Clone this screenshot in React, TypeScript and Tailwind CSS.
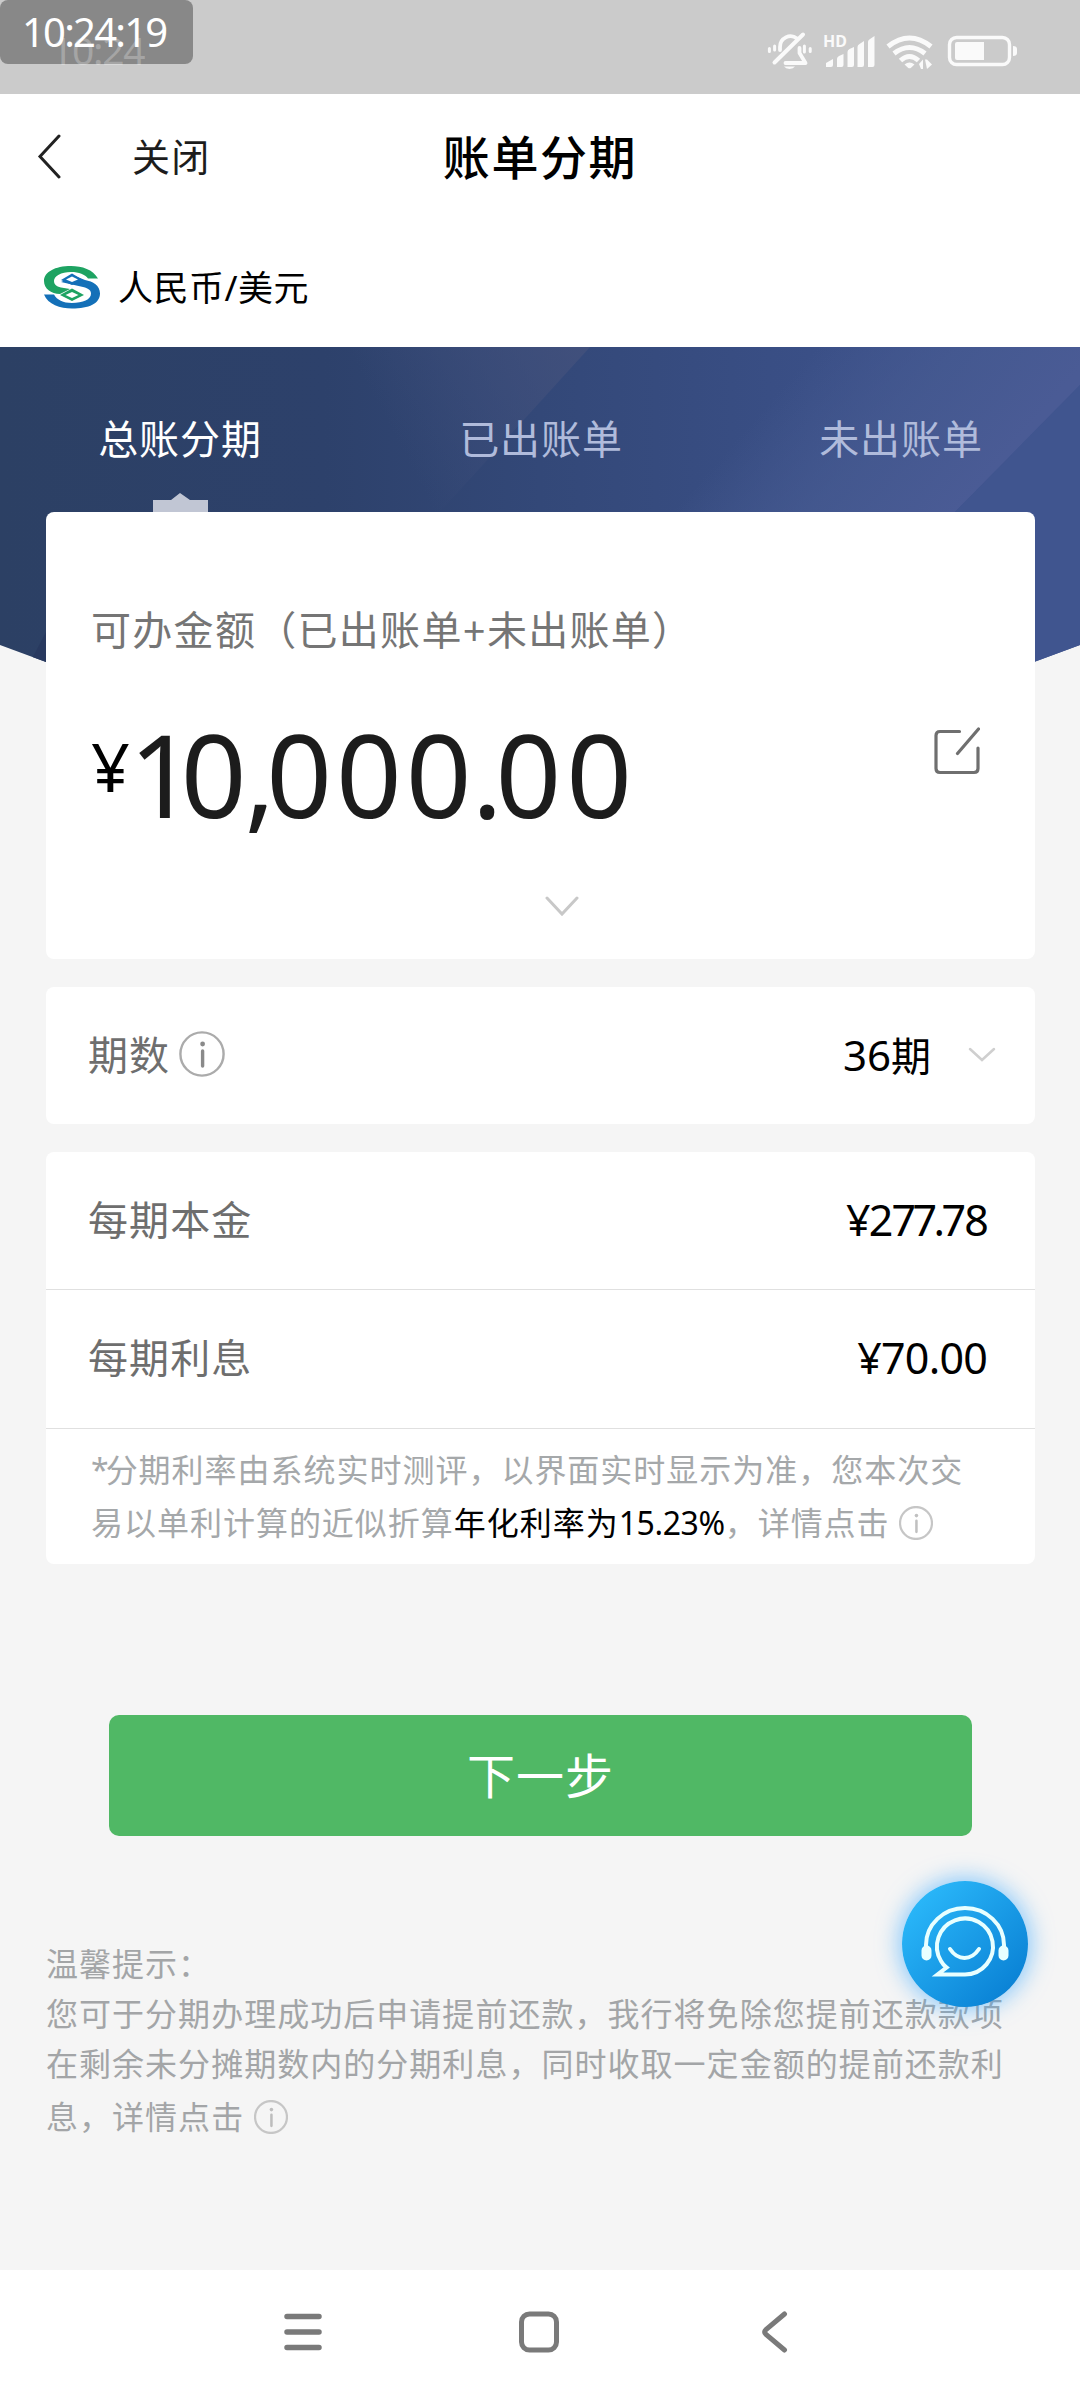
import type { ReactNode } from 'react';

function InfoIcon({ size, ring, mark, width }: { size: number; ring: string; mark: string; width: number }) {
  return (
    <svg width={size} height={size} viewBox="0 0 46 46" fill="none" className="shrink-0">
      <circle cx="23" cy="23" r="21.6" stroke={ring} strokeWidth={width} />
      <circle cx="23.6" cy="13" r="2.4" fill={mark} />
      <path d="M23.6 20v15" stroke={mark} strokeWidth={3.4} strokeLinecap="round" />
    </svg>
  );
}

function StatusIcons() {
  return (
    <svg width="256" height="48" viewBox="764 28 256 48" fill="none" className="absolute left-[764px] top-[28px]">
      <g stroke="#fafafa" strokeWidth="3.8" strokeLinecap="round" strokeLinejoin="round">
        <path d="M780 50v-3a10.500 10.500 0 0 1 17-8.500M799.500 48v5l6 10h-20" />
        <path d="M774.500 62.500L803 34.500" strokeWidth="4" />
        <path d="M774.600 46v4M804.400 46v6" strokeWidth="3" />
        <path d="M769.400 48.500v3M810.200 48.500v3" strokeWidth="3" />
      </g>
      <path d="M784 66.500h11a6 4 0 0 1-11 0z" fill="#fafafa" />
      <path d="M826 67v-4l7-4v6q0 2-2 2zM837 67v-8q0-2 2-3l4.500-2v11q0 2-2 2zM847.500 67V52q0-2 2-3l4.500-2v18q0 2-2 2zM857.500 67V47q0-2 2-3l4.500-3v24q0 2-2 2zM868 67V42q0-2 2-3l4.500-3v29q0 2-2 2z" fill="#fafafa" />
      <g stroke="#fafafa" strokeWidth="5">
        <path d="M888 46.500q21.500-17 43 0" />
        <path d="M894 53.500q15.500-12 31 0" />
        <path d="M900.500 60.500q9-8 18 0" />
      </g>
      <path d="M904.500 64.500q5-4 10 0l-3.500 3.200q-1.500 1-3 0zM919 64l4-4.500v9.500h-2zM925 59.500h2l5 5-5 4.500z" fill="#fafafa" />
      <rect x="949.500" y="37.500" width="60" height="27" rx="7" stroke="#fafafa" strokeWidth="3.400" />
      <path d="M957 42h27v18h-27q-2 0-2-2V44q0-2 2-2zM1013 46q4 0 4 3v4q0 3-4 3z" fill="#fafafa" />
    </svg>
  );
}

function StatusBar() {
  return (
    <header className="relative h-[94px] bg-[#cbcbcb]">
      <div className="absolute left-0 top-0 h-[64px] w-[193px] rounded-[8px] bg-[#888888]" />
      <div className="absolute left-[51px] top-[22px] text-[39px] leading-[56px] tracking-[-1.300px] text-white/25">10:24</div>
      <div className="absolute left-[22px] top-[1px] whitespace-nowrap text-[40px] leading-[62px] tracking-[-1.800px] text-white">
        10:24:19
      </div>
      <span className="absolute left-[823px] top-[33px] text-[16px] font-bold leading-[16px] text-[#fafafa]">HD</span>
      <StatusIcons />
    </header>
  );
}

function BankLogo() {
  return (
    <svg width="58" height="44" viewBox="0 0 58 44" fill="none">
      <path d="M55 13.500C50 4.500 39 1 28 1 12 1 1 7 1 16c0 8 7 12.500 16 13l10-5-9-1.500C13 21.500 11 19 11 16c0-5 7-9 17-9 8 0 14 2.500 17 6.500z" fill="#1ea362" />
      <path d="M1 29.500C5 39.500 17 43.500 29 43.500c17 0 28-5 28-15 0-8-7-12-15-13.500L32 11l-14 6 22 5c6 1.500 8 3.500 8 6.500 0 6-8 9.500-19 9.500-9 0-15-3-18-8.500z" fill="#1470b8" />
      <path d="M29 8.500l11 6.500-11 5-11-5z" fill="#1470b8" />
      <path d="M29 11.500l6 3-6 2.500-6-2.500z" fill="white" />
      <path d="M29 23.500l12 6.500-12 6-12-6z" fill="#1ea362" />
      <path d="M29 27l6.500 3-6.500 3-6.500-3z" fill="white" />
    </svg>
  );
}

function HeroBackground() {
  return (
    <svg width="1080" height="340" viewBox="0 0 1080 340" className="absolute left-0 top-0">
      <defs>
        <linearGradient id="hero" x1="0" y1="0" x2="1" y2="0">
          <stop offset="0" stopColor="#2c4064" />
          <stop offset="0.3" stopColor="#2d416b" />
          <stop offset="0.5" stopColor="#334878" />
          <stop offset="0.75" stopColor="#3a4f86" />
          <stop offset="1" stopColor="#405490" />
        </linearGradient>
        <linearGradient id="bandA" gradientUnits="userSpaceOnUse" x1="400" y1="100" x2="590" y2="0">
          <stop offset="0" stopColor="#43517c" stopOpacity="0" />
          <stop offset="1" stopColor="#43517c" stopOpacity="0.85" />
        </linearGradient>
        <linearGradient id="bandB" gradientUnits="userSpaceOnUse" x1="800" y1="20" x2="960" y2="160">
          <stop offset="0" stopColor="#495d94" stopOpacity="0" />
          <stop offset="0.5" stopColor="#475b92" stopOpacity="0.7" />
          <stop offset="1" stopColor="#4a5b95" />
        </linearGradient>
        <clipPath id="heroShape">
          <path d="M0 0h1080v298L1034 315H46L0 298z" />
        </clipPath>
      </defs>
      <g clipPath="url(#heroShape)">
        <path d="M0 0h1080v340H0z" fill="url(#hero)" />
        <path d="M200 0h390L440 165H200z" fill="url(#bandA)" />
        <path d="M700 0h380v38L955 165H600z" fill="url(#bandB)" />
        <path d="M1080 38v302H800L955 165z" fill="#40558f" />
        <path d="M46 285v40H25z" fill="#28395f" />
      </g>
    </svg>
  );
}

function Tabs() {
  const tabs = ['总账分期', '已出账单', '未出账单'];
  return (
    <div className="relative grid h-[165px] grid-cols-3">
      {tabs.map((tab, i) => (
        <div key={tab} className={i === 0 ? 'relative pt-[62px] text-center text-white' : 'relative pl-[2px] pt-[62px] text-center text-[#b0bbdb]'}>
          <span className="text-[40px] leading-[60px] tracking-[0.9px]">{tab}</span>
          {i === 0 && (
            <svg width="56" height="20" viewBox="0 0 56 20" className="absolute bottom-0 left-[153px]">
              <path d="M0 8h18l9-7 10 7h18v12H0z" fill="#c1c6d4" />
            </svg>
          )}
        </div>
      ))}
    </div>
  );
}

function AmountCard() {
  return (
    <section className="relative mx-[46px] h-[447px] w-[989px] rounded-[8px] bg-white pl-[45px] pr-[55px]">
      <p className="pt-[88px] text-[40px] leading-[60px] tracking-[1.300px] text-[#757575]">可办金额（已出账单+未出账单）</p>
      <div className="flex h-[150px] items-start justify-between pt-[41px]">
        <div className="flex items-start">
          <span className="pt-[32px] text-[68px] leading-[66px] tracking-[-1px] text-black">¥</span>
          <span className="whitespace-nowrap pt-[8px] text-[115px] leading-[130px] tracking-[4px] text-[#1c1c1c]">
            <span className="tracking-[-14px]">1</span>
            <span className="tracking-[-2px]">0</span>
            <span className="tracking-[-9px]">,</span>00
            <span className="tracking-[0px]">0</span>
            <span className="tracking-[-7px]">.</span>
            <span className="tracking-[5px]">00</span>
          </span>
        </div>
        <svg width="46" height="48" viewBox="0 0 46 48" fill="none" stroke="#6f6f6f" strokeWidth="3.200" strokeLinecap="round" className="mt-[26px] shrink-0">
          <path d="M25.500 4.500H6q-4 0-4 4v33q0 4 4 4h34q4 0 4-4V21" />
          <path d="M23.500 26.500L44.500 2" />
        </svg>
      </div>
      <svg width="34" height="22" viewBox="0 0 34 22" fill="none" className="ml-[454px] mt-[86px]">
        <path d="M2 2l15 16L32 2" stroke="#c8c8c8" strokeWidth="3" strokeLinecap="round" />
      </svg>
    </section>
  );
}

function Row({ label, children }: { label: ReactNode; children: ReactNode }) {
  return (
    <div className="flex h-[137px] items-center justify-between pb-[2px] pl-[42px] pr-[48px] text-[40px] leading-[60px]">
      <div className="flex items-center tracking-[1.100px] text-[#6e6e6e]">{label}</div>
      <div className="flex items-center text-black">{children}</div>
    </div>
  );
}

function Assistant() {
  return (
    <div className="absolute left-[902px] top-[1881px] h-[126px] w-[126px] rounded-full bg-linear-to-br from-[#2fc0ff] to-[#0579cf] shadow-[0_0_22px_3px_rgba(64,170,255,0.6)]">
      <svg width="126" height="126" viewBox="0 0 126 126" fill="none" stroke="#e8ffff" strokeWidth="4">
        <path d="M24 68V64a39 37 0 0 1 78 0v4" />
        <path d="M63 93.500A28 28 0 1 0 39 80q2.500 4.500 5.500 6.500L35.500 93.500z" />
        <path d="M48 68q6 9 14.500 9T77 68" strokeLinecap="round" />
        <rect x="20.500" y="65.500" width="8" height="13" rx="4" fill="#e8ffff" strokeWidth="2" />
        <rect x="97.500" y="65.500" width="8" height="13" rx="4" fill="#e8ffff" strokeWidth="2" />
      </svg>
    </div>
  );
}

export default function App() {
  return (
    <div
      lang="zh-CN"
      className="relative flex h-[2400px] w-[1080px] flex-col overflow-hidden bg-[#f5f5f5] font-['Noto_Sans','Noto_Sans_CJK_SC',sans-serif]"
    >
      <StatusBar />

      <nav className="relative flex h-[130px] items-center bg-white pb-[5px] pl-[37px]">
        <svg width="24" height="46" viewBox="0 0 24 46" fill="none">
          <path d="M22 2L3 22.500 22 43" stroke="#222" strokeWidth="3" strokeLinecap="round" />
        </svg>
        <span className="-mt-[2px] ml-[71px] text-[38px] leading-[60px] tracking-[1.200px] text-[#1c1c1c]">关闭</span>
        <h1 className="absolute inset-x-0 text-center text-[47px] font-medium leading-[70px] tracking-[1.600px] text-black">账单分期</h1>
      </nav>

      <div className="flex h-[123px] items-center bg-white pl-[43px] pt-[3px]">
        <BankLogo />
        <span className="ml-[17px] mt-[2px] text-[35px] leading-[50px] tracking-[0.500px] text-black">人民币/美元</span>
      </div>

      <main className="relative">
        <HeroBackground />
        <Tabs />
        <AmountCard />

        <section className="mx-[46px] mt-[28px] w-[989px] rounded-[8px] bg-white">
          <Row
            label={
              <>
                <span className="mr-[9px]">期数</span>
                <span className="-mt-[2px]">
                  <InfoIcon size={46} ring="#ababab" mark="#8a8a8a" width={2.4} />
                </span>
              </>
            }
          >
            <span className="mr-[37px] mt-[2px] text-[42px]">
              36<span className="text-[40px]">期</span>
            </span>
            <svg width="28" height="16" viewBox="0 0 28 16" fill="none" className="-mr-[9px]">
              <path d="M2 2l12 11L26 2" stroke="#cfcfcf" strokeWidth="2.500" strokeLinecap="round" />
            </svg>
          </Row>
        </section>

        <section className="mx-[46px] mt-[28px] h-[412px] w-[989px] rounded-[8px] bg-white">
          <div className="h-[138px] border-b border-[#e0e0e0]">
            <Row label="每期本金">
              <span className="text-[43px] tracking-[-1.900px]">
                ¥2<span className="tracking-[-3.500px]">77.</span>78
              </span>
            </Row>
          </div>
          <div className="h-[139px] border-b border-[#e0e0e0]">
            <Row label="每期利息">
              <span className="text-[43px] tracking-[-0.800px]">¥70.00</span>
            </Row>
          </div>
          <div className="whitespace-nowrap pl-[45px] pt-[14px] text-[32px] leading-[53px] tracking-[0.980px] text-[#a5a8aa]">
            <p>
              <span className="tracking-[-3px]">*</span>分期利率由系统实时测评，以界面实时显示为准，您本次交
            </p>
            <p className="flex items-center">
              易以单利计算的近似折算
              <span className="text-black">
                年化利率为<span className="tracking-[-0.400px]">15.23%</span>
              </span>
              ，详情点击
              <span className="ml-[9px]">
                <InfoIcon size={34} ring="#c6c6c6" mark="#c0c0c0" width={3} />
              </span>
            </p>
          </div>
        </section>

        <button className="mx-[109px] mt-[151px] block h-[121px] w-[863px] rounded-[10px] bg-[#50b865] text-[48px] leading-[70px] tracking-[1px] text-white">
          下一步
        </button>

        <section className="ml-[46px] mt-[103px] whitespace-nowrap text-[32px] leading-[50px] tracking-[1.030px] text-[#a3a5a7]">
          <p>温馨提示：</p>
          <p>您可于分期办理成功后申请提前还款，我行将免除您提前还款款项</p>
          <p>在剩余未分摊期数内的分期利息，同时收取一定金额的提前还款利</p>
          <p className="flex items-center pt-[3px]">
            息，详情点击
            <span className="ml-[10px]">
              <InfoIcon size={34} ring="#c6c6c6" mark="#bdbdbd" width={3} />
            </span>
          </p>
        </section>
      </main>

      <Assistant />

      <footer className="absolute inset-x-0 bottom-0 flex h-[130px] items-center bg-white pb-[6px] pl-[283px]">
        <svg width="40" height="42" viewBox="0 0 40 42" stroke="#7a7a7a" strokeWidth="5.500" strokeLinecap="round">
          <path d="M4 5.500h32M4 21h32M4 36.500h32" />
        </svg>
        <svg width="42" height="44" viewBox="0 0 42 44" fill="none" stroke="#7a7a7a" strokeWidth="5" className="ml-[195px]">
          <rect x="3.500" y="4" width="35" height="36" rx="8" />
        </svg>
        <svg width="30" height="44" viewBox="0 0 30 44" fill="none" stroke="#7a7a7a" strokeWidth="5" strokeLinecap="round" className="ml-[200px]">
          <path d="M24.500 4L6 19.500q-2.500 2.500 0 5L24.500 40" />
        </svg>
      </footer>
    </div>
  );
}
